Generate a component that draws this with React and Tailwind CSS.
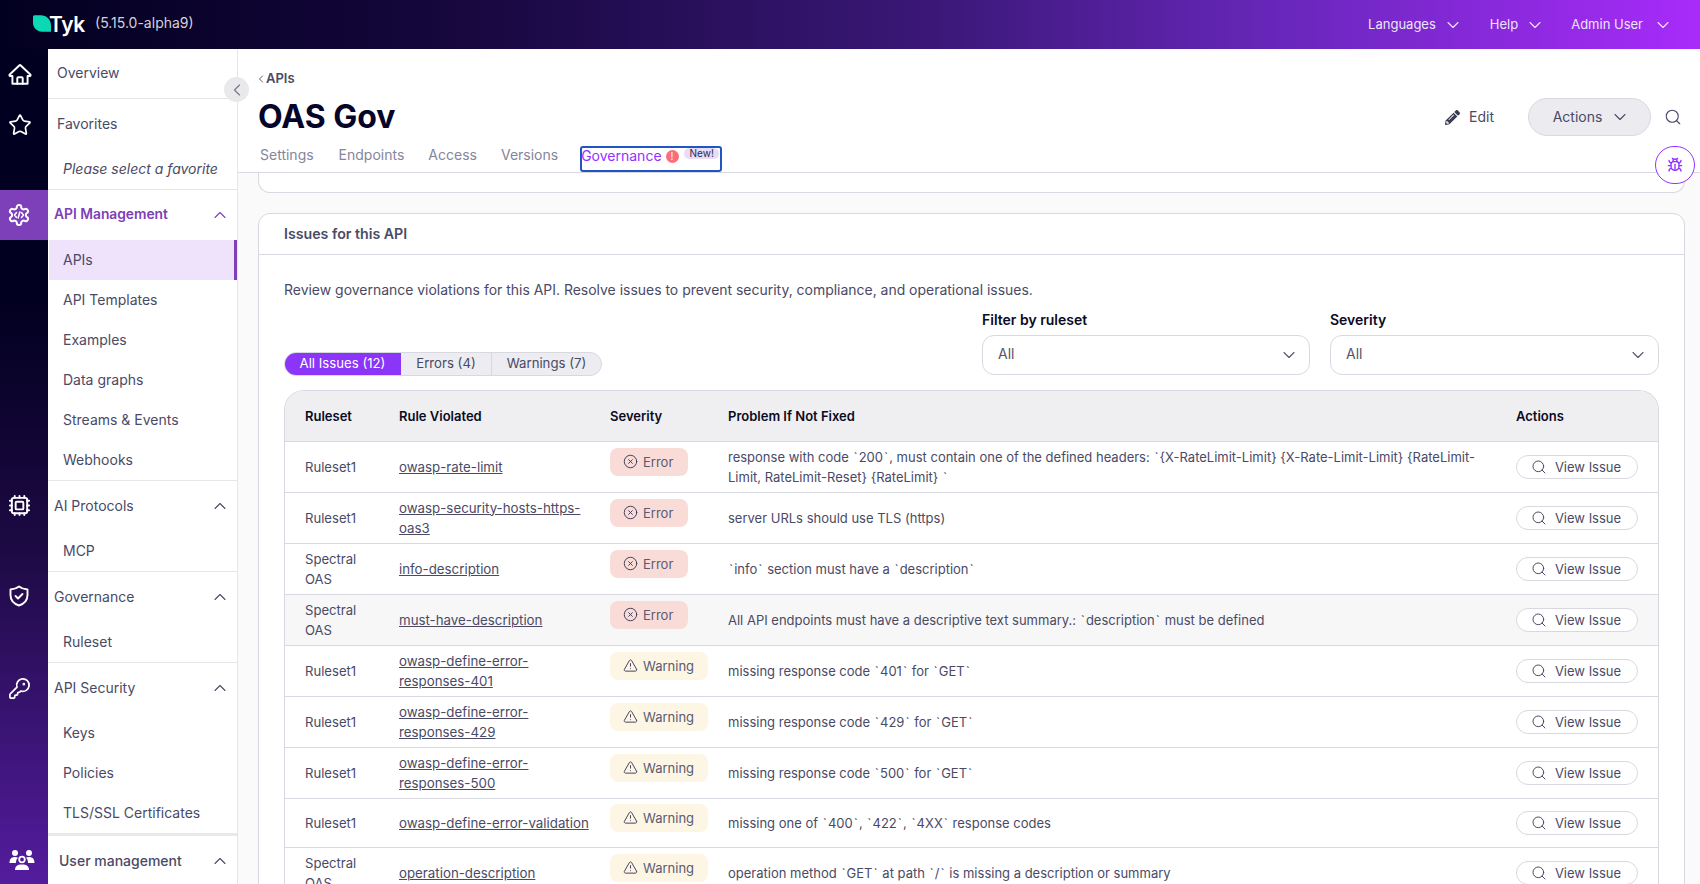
import React from 'react';
import { Star, Cpu, KeyRound, ChevronUp, ChevronDown, ChevronLeft, Search, Bug, CircleX, TriangleAlert } from 'lucide-react';
import { FaPencilAlt } from 'react-icons/fa';

const sections = [
  { title: 'AI Protocols', items: ['MCP'] },
  { title: 'Governance', items: ['Ruleset'] },
  { title: 'API Security', items: ['Keys', 'Policies', 'TLS/SSL Certificates'] },
];

const rows = [
  { set: 'Ruleset1', rule: 'owasp-rate-limit', sev: 'Error', text: 'response with code `200`, must contain one of the defined headers: `{X-RateLimit-Limit} {X-Rate-Limit-Limit} {RateLimit-Limit, RateLimit-Reset} {RateLimit} `' },
  { set: 'Ruleset1', rule: 'owasp-security-hosts-https-oas3', sev: 'Error', text: 'server URLs should use TLS (https)' },
  { set: 'Spectral OAS', rule: 'info-description', sev: 'Error', text: '`info` section must have a `description`' },
  { set: 'Spectral OAS', rule: 'must-have-description', sev: 'Error', text: 'All API endpoints must have a descriptive text summary.: `description` must be defined', hover: true },
  { set: 'Ruleset1', rule: 'owasp-define-error-responses-401', sev: 'Warning', text: 'missing response code `401` for `GET`' },
  { set: 'Ruleset1', rule: 'owasp-define-error-responses-429', sev: 'Warning', text: 'missing response code `429` for `GET`' },
  { set: 'Ruleset1', rule: 'owasp-define-error-responses-500', sev: 'Warning', text: 'missing response code `500` for `GET`' },
  { set: 'Ruleset1', rule: 'owasp-define-error-validation', sev: 'Warning', text: 'missing one of `400`, `422`, `4XX` response codes' },
  { set: 'Spectral OAS', rule: 'operation-description', sev: 'Warning', text: 'operation method `GET` at path `/` is missing a description or summary' },
];

// backticks sit wider in the original
const Ticks = ({ text }) => {
  const parts = text.split('`');
  return parts.map((p, i) => (
    <React.Fragment key={i}>
      {p}
      {i < parts.length - 1 && <span className="px-px">`</span>}
    </React.Fragment>
  ));
};

const HomeIcon = () => (
  <svg width="26" height="26" viewBox="0 0 24 24" fill="none" stroke="white" strokeWidth="1.8" strokeLinecap="round" strokeLinejoin="round">
    <path d="M2.500 12.500 11.300 4.100a1 1 0 0 1 1.400 0l8.800 8.400a.8.8 0 0 1-.6 1.400H19V21H5v-7.100H3.100a.8.8 0 0 1-.6-1.400z" />
    <path d="M9.500 21v-5a1 1 0 0 1 1-1h3a1 1 0 0 1 1 1v5" />
  </svg>
);

const ShieldIcon = () => (
  <svg width="24" height="24" viewBox="0 0 24 24" fill="none" stroke="white" strokeWidth="1.900" strokeLinecap="round" strokeLinejoin="round">
    <path d="M12 2.500c2.500 2 5.500 2.800 8.500 3V11c0 5.500-4 9-8.500 10.500C7.500 20 3.500 16.500 3.500 11V5.500c3-.2 6-1 8.500-3z" />
    <path d="m8.500 12 2.500 2.500 4.500-4.500" />
  </svg>
);

const GearCode = () => (
  <svg width="24" height="24" viewBox="0 0 24 24" fill="none" stroke="currentColor" strokeWidth="2" strokeLinecap="round" strokeLinejoin="round">
    <path d="M12.22 2h-.44a2 2 0 0 0-2 2v.18a2 2 0 0 1-1 1.73l-.43.25a2 2 0 0 1-2 0l-.15-.08a2 2 0 0 0-2.73.73l-.22.38a2 2 0 0 0 .73 2.73l.15.1a2 2 0 0 1 1 1.72v.51a2 2 0 0 1-1 1.74l-.15.09a2 2 0 0 0-.73 2.73l.22.38a2 2 0 0 0 2.73.73l.15-.08a2 2 0 0 1 2 0l.43.25a2 2 0 0 1 1 1.73V20a2 2 0 0 0 2 2h.44a2 2 0 0 0 2-2v-.18a2 2 0 0 1 1-1.73l.43-.25a2 2 0 0 1 2 0l.15.08a2 2 0 0 0 2.73-.73l.22-.39a2 2 0 0 0-.73-2.73l-.15-.08a2 2 0 0 1-1-1.74v-.5a2 2 0 0 1 1-1.74l.15-.09a2 2 0 0 0 .73-2.73l-.22-.38a2 2 0 0 0-2.73-.73l-.15.08a2 2 0 0 1-2 0l-.43-.25a2 2 0 0 1-1-1.73V4a2 2 0 0 0-2-2z" />
    <path d="M9.500 9.500 7.500 12l2 2.500M14.500 9.500l2 2.500-2 2.500M12.800 9l-1.600 6" strokeWidth="1.500" />
  </svg>
);

const UsersIcon = () => (
  <svg width="26" height="22" viewBox="0 0 26 22" fill="white">
    <circle cx="6" cy="4" r="3" />
    <circle cx="20" cy="4" r="3" />
    <path d="M0.5 14c0-4 2-6 5.500-6 1.200 0 2.200.2 3 .7C7.700 9.800 7 11.500 7 14z" />
    <path d="M25.500 14c0-4-2-6-5.500-6-1.200 0-2.200.2-3 .7 1.300 1.100 2 2.800 2 5.300z" />
    <circle cx="13" cy="10.500" r="2.800" fill="none" stroke="white" strokeWidth="1.800" />
    <path d="M6 21c0-3.500 2-5.500 7-5.500s7 2 7 5.500z" />
  </svg>
);

const Logo = () => (
  <div className="flex items-start h-5">
    <svg width="18" height="17" viewBox="0 0 18 16.500">
      <path d="M0 1.500A1.500 1.500 0 0 1 1.500 0H8c5 0 10 4 10 10v6.500H9c-5 0-9-4.500-9-8.500z" fill="#0bd9b5" />
    </svg>
    <span className="-ml-[2px] text-[21px] leading-[20px] font-semibold text-white tracking-[-0.3px]">Tyk</span>
  </div>
);

const NavItem = ({ label, active }) => (
  <div className={`h-10 flex items-center ${active ? 'pl-[14px] bg-[#efe2fb] border-r-[3px] border-[#7d40b9] ml-px' : 'pl-[15px]'}`}>
    <span>{label}</span>
  </div>
);

const SectionHead = ({ title, active }) => (
  <div className={`h-[50px] flex items-center justify-between pl-[6px] pr-[7px] ${active ? 'text-[#7d40b9] font-semibold text-[13.8px]' : ''}`}>
    <span>{title}</span>
    <ChevronUp size={20} strokeWidth={1.3} />
  </div>
);

const Badge = ({ sev }) => (
  sev === 'Error' ? (
    <div className="w-[78px] h-7 mb-[10px] rounded-lg bg-[#f9dcd7] flex items-center pl-[13px] gap-[5px] text-[#5a5a72]">
      <CircleX size={15} strokeWidth={1.5} className="text-[#3a3a55] -mt-px" />
      <span>Error</span>
    </div>
  ) : (
    <div className="w-[98px] h-7 mb-[10px] rounded-lg bg-[#fef6e4] flex items-center pl-[13px] gap-[5px] text-[#5a5a72]">
      <TriangleAlert size={15} strokeWidth={1.5} className="text-[#3a3a55] -mt-px" />
      <span>Warning</span>
    </div>
  )
);

const Select = ({ label, className }) => (
  <div className={className}>
    <div className="text-sm font-semibold text-[#0b0b22] leading-5 mb-[5px]">{label}</div>
    <div className="h-10 border border-[#d8d8e0] rounded-xl bg-white flex items-center justify-between pl-[15px] pr-[10px] text-sm text-[#55556e]">
      <span className="-mt-[2px]">All</span>
      <ChevronDown size={20} strokeWidth={1.3} />
    </div>
  </div>
);

export default function App() {
  return (
    <div className="h-[884px] overflow-hidden flex flex-col font-['Inter',sans-serif] text-[#4a4a66] relative">
      <div className="h-[49px] shrink-0 flex items-center justify-between pl-[33px] pr-[27px] bg-[linear-gradient(to_right,#020020_0%,#14063a_25%,#3b1878_55%,#6a27bd_76%,#a82bfa_100%)] text-[13px] text-[#ece6f8]">
        <div className="flex items-center">
          <Logo />
          <span className="ml-[10px] text-sm text-[#d4d2dc] -mt-[3px]">(5.15.0-alpha9)</span>
        </div>
        <div className="flex items-center">
          <span>Languages</span>
          <ChevronDown size={20} strokeWidth={1.3} className="ml-[7px]" />
          <span className="ml-[27px]">Help</span>
          <ChevronDown size={20} strokeWidth={1.3} className="ml-[7px]" />
          <span className="ml-[26px]">Admin User</span>
          <ChevronDown size={20} strokeWidth={1.3} className="ml-[10px]" />
        </div>
      </div>

      <div className="flex-1 flex min-h-0 relative">
        <div className="w-12 shrink-0 relative bg-[linear-gradient(to_bottom,#020020_0%,#020020_30%,#1d0a44_60%,#541c9e_100%)] text-white">
          <div className="h-[50px] flex items-center justify-center pr-2"><HomeIcon /></div>
          <div className="h-[51px] flex items-center justify-center pr-2"><Star size={24} strokeWidth={1.7} /></div>
          <div className="h-10" />
          <div className="h-[50px] bg-[#7d40b9] flex items-center justify-center pr-[10px]"><GearCode /></div>
          <div className="h-[240px]" />
          <div className="h-[50px] flex items-center justify-center pr-[10px]"><Cpu size={23} strokeWidth={2} /></div>
          <div className="h-[41px]" />
          <div className="h-[50px] flex items-center justify-center pr-[10px]"><ShieldIcon /></div>
          <div className="h-[42px]" />
          <div className="h-[50px] flex items-center justify-center pr-[10px]"><KeyRound size={23} strokeWidth={1.8} /></div>
          <div className="h-[122px]" />
          <div className="h-[50px] flex items-center justify-center pr-[5px]"><UsersIcon /></div>
        </div>

        <div className="w-[190px] shrink-0 bg-white border-r border-[#e6e6ea] text-sm">
          <div className="h-[50px] flex items-center pl-[9px] pb-px border-b border-[#e6e6ea]">Overview</div>
          <div className="h-[50px] flex items-center pl-[9px]">Favorites</div>
          <div className="h-10 flex items-center pl-[15px] italic">Please select a favorite</div>
          <div className="border-t border-[#e6e6ea]">
            <SectionHead title="API Management" active />
            {['APIs', 'API Templates', 'Examples', 'Data graphs', 'Streams & Events', 'Webhooks'].map((x, i) => (
              <NavItem key={x} label={x} active={i === 0} />
            ))}
          </div>
          {sections.map((s) => (
            <div key={s.title} className="border-t border-[#e6e6ea]">
              <SectionHead title={s.title} />
              {s.items.map((x) => <NavItem key={x} label={x} />)}
            </div>
          ))}
          <div className="border-t-[3px] border-[#e9e9ec] text-sm font-medium">
            <div className="h-[50px] flex items-center justify-between pl-[11px] pr-[7px] pb-px">
              <span>User management</span>
              <ChevronUp size={20} strokeWidth={1.3} />
            </div>
          </div>
        </div>

        <div className="flex-1 min-w-0 flex flex-col bg-[#fafafa]">
          <div className="h-[124px] shrink-0 bg-white border-b border-[#d8d8e0] pl-5 pr-[15px] flex flex-col">
            <div className="flex justify-between h-[98px] pr-[3px]">
              <div>
                <div className="mt-5 h-5 flex items-center text-[13px] font-semibold text-[#4a4a66]">
                  <ChevronLeft size={12} strokeWidth={1.8} className="-ml-[3px] -mr-[1px]" />
                  <span>APIs</span>
                </div>
                <h1 className="mt-[8px] text-[32px] leading-10 font-bold text-[#05052a]">OAS Gov</h1>
              </div>
              <div className="flex items-center mt-[49px] h-[38px]">
                <FaPencilAlt size={15} className="text-[#3a3a55]" />
                <span className="ml-[9px] text-sm">Edit</span>
                <div className="ml-[34px] w-[123px] h-[38px] rounded-full bg-[#ebebf0] border border-[#d8d8e0] flex items-center justify-center gap-[8px] pl-1 text-sm">
                  <span>Actions</span>
                  <ChevronDown size={20} strokeWidth={1.3} />
                </div>
                <Search size={18} strokeWidth={1.5} className="ml-[13px]" />
              </div>
            </div>
            <div className="flex items-start text-sm leading-5 text-[#85859b] pl-[2px]">
              <span className="-mt-[2px]">Settings</span>
              <span className="ml-[25px] -mt-[2px]">Endpoints</span>
              <span className="ml-6 -mt-[2px]">Access</span>
              <span className="ml-6 -mt-[2px]">Versions</span>
              <div className="ml-[22px] -mt-px w-[142px] h-[26px] border-2 border-[#2255c4] rounded-[3px] flex items-center pb-[6px] overflow-hidden relative">
                <span className="-ml-px text-[#9333ff]">Governance</span>
                <span className="ml-[4px] shrink-0 w-[13px] h-[13px] rounded-full bg-[#fb6f7d] text-white text-[10px] flex items-center justify-center">!</span>
                <span className="absolute right-[1px] top-0 w-[35px] h-[11px] rounded-full bg-[#e8dcf9] text-[10px] leading-[11px] text-[#2a2a45] text-center">New!</span>
              </div>
            </div>
          </div>

          <div className="flex-1 min-h-0 overflow-hidden pl-5 pr-[15px]">
            <div className="h-5 bg-white border border-t-0 border-[#d8d8e0] rounded-b-xl" />
            <div className="mt-[20px] bg-white border border-[#d8d8e0] rounded-t-xl">
              <div className="h-[41px] flex items-center pl-[25px] border-b border-[#d8d8e0] text-[14.2px] font-semibold">Issues for this API</div>
              <div className="px-[25px]">
                <p className="mt-[25px] text-[13.96px] leading-5">Review governance violations for this API. Resolve issues to prevent security, compliance, and operational issues.</p>
                <div className="mt-[10px] flex items-end justify-between">
                  <div className="flex h-6 -mb-px text-[13.2px] rounded-full overflow-hidden border border-[#d8d8e0] bg-[#ececf1] w-[318px]">
                    <div className="w-[117px] -my-px -ml-px bg-[#8b35f8] text-white flex items-center justify-center">All Issues (12)</div>
                    <div className="w-[91px] border-r border-[#d8d8e0] flex items-center justify-center">Errors (4)</div>
                    <div className="flex-1 flex items-center justify-center">Warnings (7)</div>
                  </div>
                  <div className="flex gap-5">
                    <Select label="Filter by ruleset" className="w-[328px]" />
                    <Select label="Severity" className="w-[329px]" />
                  </div>
                </div>
                <div className="mt-[15px] border border-b-0 border-[#d8d8e0] rounded-t-[20px] overflow-hidden">
                  <table className="w-full table-fixed border-collapse text-[13px] leading-5">
                    <colgroup>
                      <col className="w-[94px]" />
                      <col className="w-[211px]" />
                      <col className="w-[118px]" />
                      <col />
                      <col className="w-[162px]" />
                    </colgroup>
                    <thead>
                      <tr className="h-[50px] bg-[#efeff2] border-b border-[#d8d8e0] text-left text-[#0b0b22]">
                        <th className="pl-5 font-semibold">Ruleset</th>
                        <th className="pl-5 font-semibold">Rule Violated</th>
                        <th className="pl-5 font-semibold">Severity</th>
                        <th className="pl-5 font-semibold">Problem If Not Fixed</th>
                        <th className="pl-5 font-semibold">Actions</th>
                      </tr>
                    </thead>
                    <tbody>
                      {rows.map((r) => (
                        <tr key={r.rule} className={`border-b border-[#d8d8e0] ${r.hover ? 'bg-[#f7f7f8]' : ''}`}>
                          <td className="pl-5 pr-3 py-[5px] text-[13.1px]">{r.set}</td>
                          <td className="pl-5 py-[5px] text-[13.3px]"><a className="underline">{r.rule}</a></td>
                          <td className="pl-5 py-[5px]"><Badge sev={r.sev} /></td>
                          <td className="pl-5 pr-4 py-[5px]"><Ticks text={r.text} /></td>
                          <td className="pl-5 py-[5px]">
                            <div className="w-[122px] h-6 rounded-full border border-[#d8d8e0] bg-white flex items-center justify-center gap-[8px] pr-[2px]">
                              <Search size={16} strokeWidth={1.5} />
                              <span>View Issue</span>
                            </div>
                          </td>
                        </tr>
                      ))}
                    </tbody>
                  </table>
                </div>
              </div>
            </div>
          </div>
        </div>

        <div className="absolute left-[224px] top-[28px] w-[25px] h-[25px] rounded-full bg-[#e9e9ec] flex items-center justify-center text-[#77778a]">
          <ChevronLeft size={20} strokeWidth={1.4} />
        </div>
        <div className="absolute left-[1655px] top-[97px] w-10 h-[38px] rounded-full bg-white border border-[#9333ff] flex items-center justify-center text-[#9333ff]">
          <Bug size={16} strokeWidth={2} />
        </div>
      </div>
    </div>
  );
}
